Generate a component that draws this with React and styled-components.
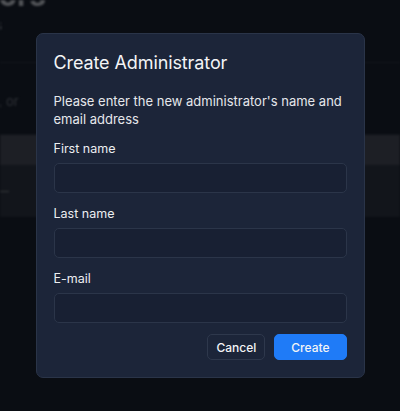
import styled, { createGlobalStyle } from "styled-components"

const GlobalStyle = createGlobalStyle`
  html, body {
    margin: 0;
    background: #141a26;
    font-family: Inter, "Noto Sans", sans-serif;
    -webkit-font-smoothing: antialiased;
  }
  * { box-sizing: border-box; }
`

export default function App() {
  return (
    <>
      <GlobalStyle />

      {/* the admin list behind the dialog */}
      <Page aria-hidden="true">
        <Heading>Administrators</Heading>
        <Subtitle>Manage all administrators</Subtitle>
        <Toolbar>
          <Hint>Search by first name, last name, email, or</Hint>
        </Toolbar>
        <TableHead />
        <TableRow>
          <Cell>—</Cell>
        </TableRow>
      </Page>

      <Overlay>
        <Dialog>
          <Title>Create Administrator</Title>
          <Description>
            Please enter the new administrator's name and email address
          </Description>

          <Field>
            <Label>First name</Label>
            <Input type="text" />
          </Field>
          <Field>
            <Label>Last name</Label>
            <Input type="text" />
          </Field>
          <Field>
            <Label>E-mail</Label>
            <Input type="email" />
          </Field>

          <Actions>
            <Button>Cancel</Button>
            <Button primary>Create</Button>
          </Actions>
        </Dialog>
      </Overlay>
    </>
  )
}

const Page = styled.div`
  height: 411px;
  overflow: hidden;
  filter: blur(1.2px);
`

const Heading = styled.h1`
  margin: -23px 0 0 -172px;
  font-size: 30px;
  line-height: 36px;
  font-weight: 700;
  color: #a4a8b0;
`

const Subtitle = styled.div`
  margin: 3px 0 0 -156px;
  font-size: 13px;
  line-height: 18px;
  color: #7d828c;
`

const Toolbar = styled.div`
  margin-top: 28px;
  border-top: 1px solid #2a303c;
  border-bottom: 1px solid #222833;
  height: 73px;
  padding: 30px 0 0 0;
`

const Hint = styled.div`
  margin-left: -235px;
  font-size: 13px;
  white-space: nowrap;
  color: #5c616c;
`

const TableHead = styled.div`
  height: 30px;
  background: #3a3e4a;
`

const TableRow = styled.div`
  height: 52px;
  background: #242a36;
  display: flex;
  align-items: center;
`

const Cell = styled.div`
  margin-left: -4px;
  font-size: 13px;
  color: #6a6f78;
`

const Overlay = styled.div`
  position: fixed;
  inset: 0;
  background: rgba(0, 0, 0, 0.5);
  display: flex;
  align-items: center;
  justify-content: center;
`

const Dialog = styled.div`
  width: 329px;
  background: #1c2539;
  border: 1px solid #2a3448;
  border-radius: 7px;
  padding: 17px;
  display: flex;
  flex-direction: column;
`

const Title = styled.h2`
  margin: 0;
  font-size: 18px;
  line-height: 23px;
  font-weight: 400;
  letter-spacing: -0.1px;
  color: #f3f4f6;
`

const Description = styled.p`
  margin: 19px 0 0;
  font-size: 13px;
  line-height: 17.5px;
  color: #e5e7eb;
`

const Field = styled.label`
  display: flex;
  flex-direction: column;
  gap: 5px;
  margin-top: 12px;
`

const Label = styled.span`
  font-size: 12.5px;
  line-height: 18px;
  font-weight: 400;
  color: #eceef1;
`

const Input = styled.input`
  height: 30px;
  width: 100%;
  background: #182033;
  border: 1px solid #2b3549;
  border-radius: 5px;
  color: #f3f4f6;
  font: inherit;
  font-size: 13px;
  padding: 0 10px;
  outline: none;
`

const Actions = styled.div`
  display: flex;
  justify-content: flex-end;
  gap: 9px;
  margin-top: 11px;
`

const Button = styled.button`
  height: 26px;
  padding: 0 ${props => props.primary ? "16px" : "8px"};
  border-radius: 5px;
  border: 1px solid ${props => props.primary ? "#1f7bf7" : "#2e384c"};
  background: ${props => props.primary ? "#1f7bf7" : "transparent"};
  color: #f3f4f6;
  font-family: inherit;
  font-size: 12px;
  font-weight: 500;
  cursor: pointer;
`
